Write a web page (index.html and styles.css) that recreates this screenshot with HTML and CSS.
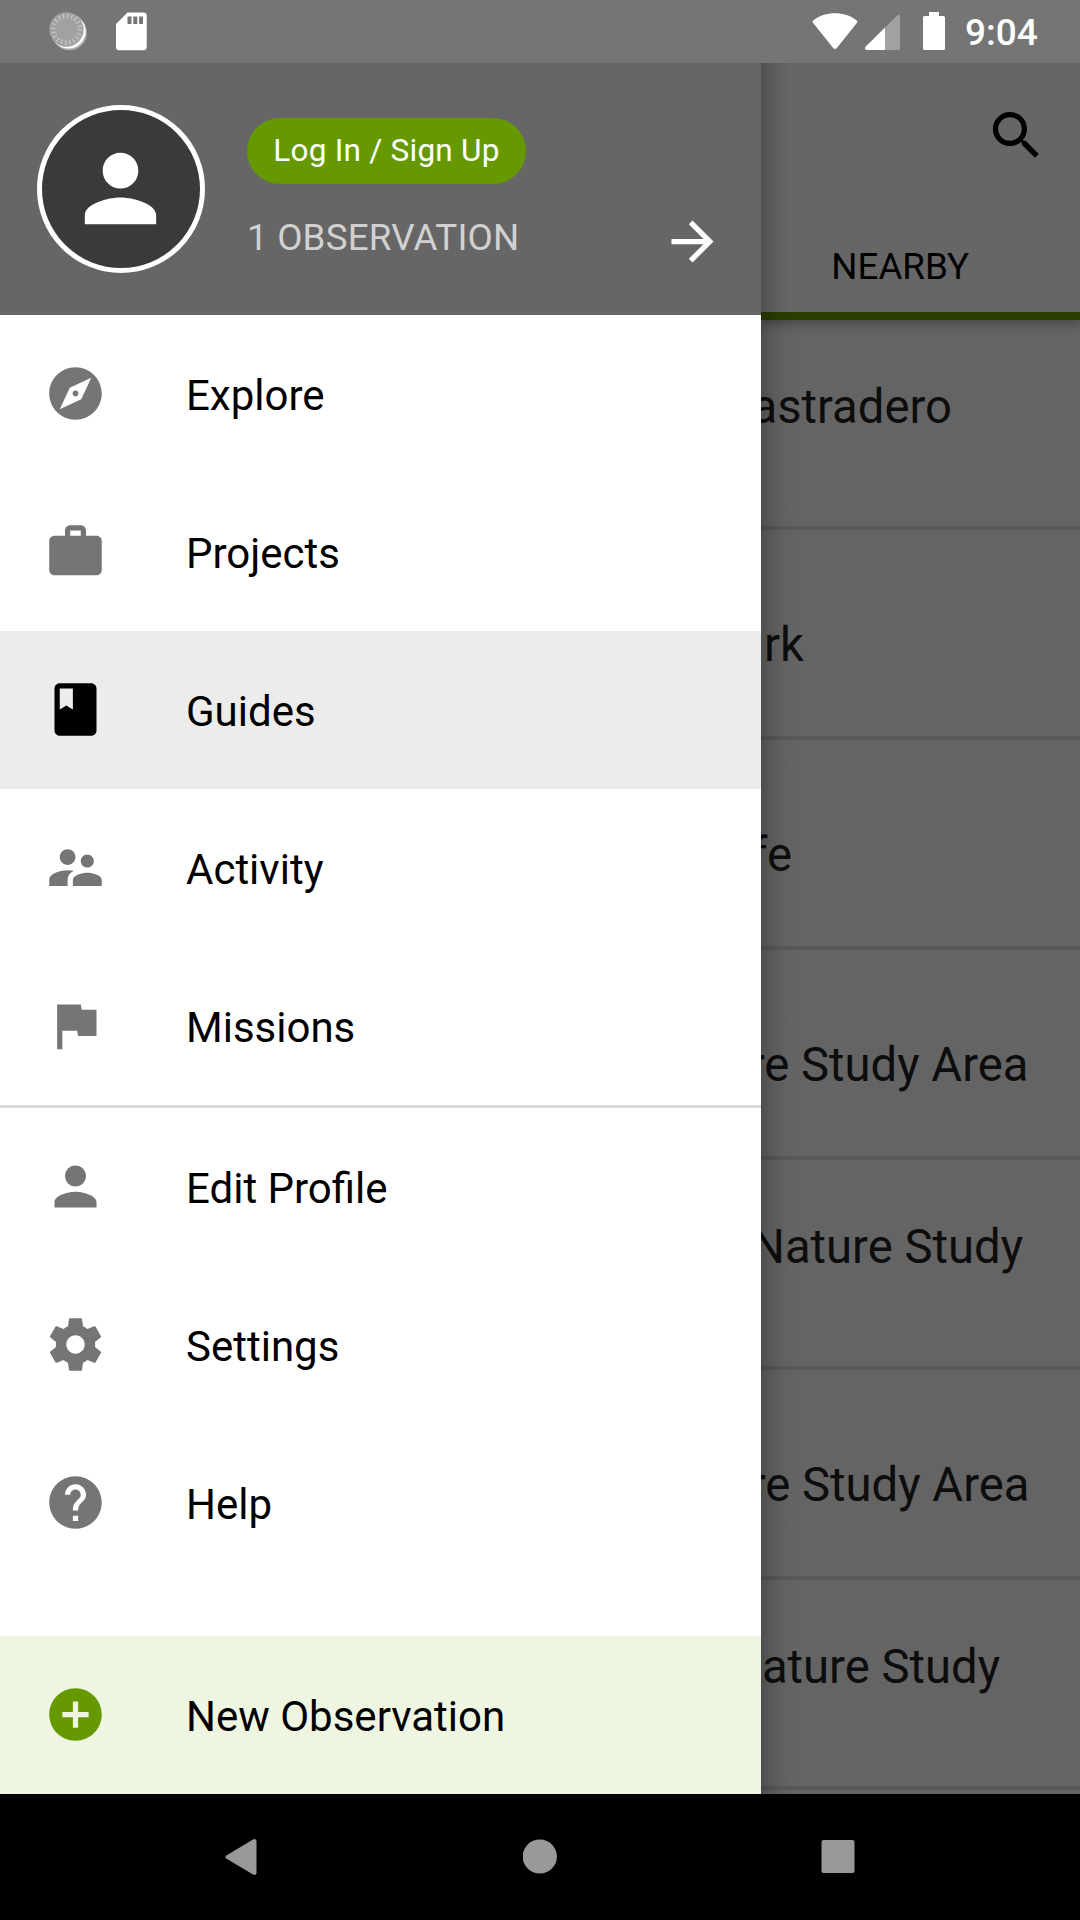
FILE: index.html
```html
<!DOCTYPE html>
<html lang="en">
<head>
<meta charset="utf-8">
<title>Guides</title>
<link rel="stylesheet" href="styles.css">
</head>
<body>
<div class="screen">
  <header class="status">
    <svg class="status-left" width="160" height="63" viewBox="0 0 160 63">
      <circle cx="69.5" cy="32.8" r="17.4" fill="#b0b0b0"/>
      <circle cx="68.3" cy="31.2" r="17.4" fill="#fff"/>
      <circle cx="66.5" cy="29.5" r="17.2" fill="#a1a1a1"/>
      <circle cx="66.5" cy="29.3" r="13.3" fill="none" stroke="#c2c2c2" stroke-width="5" stroke-dasharray="1.4 2.778"/>
      <path fill="#fff" fill-rule="evenodd" d="M127.5 12.5H143.500a3.200 3.200 0 0 1 3.200 3.200V47a3.200 3.200 0 0 1-3.200 3.200H119.200a3.200 3.200 0 0 1-3.200-3.200V24ZM127.500 16.500V24H131.500V16.500ZM133.300 16.500V24H137.300V16.500ZM139.100 16.500V24H143V16.500Z"/>
    </svg>
    <div class="status-right">
      <svg width="140" height="63" viewBox="810 0 140 63">
        <path fill="#fff" d="M813.300 20.500C825 10.800 845 10.800 856.700 20.500Q858 21.500 857 22.800L836.800 48Q835 50 833.200 48L813 22.800Q812 21.500 813.300 20.500Z"/>
        <path fill="#a1a1a1" d="M885 27.500L897.500 15.200Q900 13.800 900 16.500V48.500Q900 50 898.500 50H885Z"/>
        <path fill="#fff" d="M885 27.500V50H866.500Q864 49.500 865.500 46.800Z"/>
        <path fill="#fff" d="M929 12H939V16H943.500Q945 16 945 17.500V48.500Q945 50 943.500 50H924.500Q923 50 923 48.500V17.500Q923 16 924.500 16H929Z"/>
      </svg>
      <span class="clock">9:04</span>
    </div>
  </header>

  <main class="body">
    <aside class="drawer">
      <section class="profile">
        <div class="avatar">
          <svg width="107" height="107" viewBox="0 0 24 24"><path fill="#fff" d="M12 12c2.210 0 4-1.790 4-4s-1.790-4-4-4-4 1.790-4 4 1.790 4 4 4zm0 2c-2.670 0-8 1.340-8 4v2h16v-2c0-2.660-5.330-4-8-4z"/></svg>
        </div>
        <div class="account">
          <button class="login">Log In / Sign Up</button>
          <span class="count">1 OBSERVATION</span>
        </div>
        <svg class="arrow" viewBox="0 0 24 24"><path d="M12 4l-1.410 1.410L16.170 11H4v2h12.170l-5.580 5.590L12 20l8-8z"/></svg>
      </section>
      <nav class="menu">
        <a class="item"><svg class="icon" viewBox="0 0 24 24"><path d="M12 10.900c-.610 0-1.100.490-1.100 1.100s.490 1.100 1.100 1.100c.610 0 1.100-.490 1.100-1.100s-.490-1.100-1.100-1.100zM12 2C6.480 2 2 6.480 2 12s4.480 10 10 10 10-4.480 10-10S17.520 2 12 2zm2.190 12.190L6 18l3.810-8.190L18 6l-3.810 8.190z"/></svg><span>Explore</span></a>
        <a class="item"><svg class="icon" viewBox="0 0 24 24"><path d="M20 6h-4V4c0-1.110-.890-2-2-2h-4c-1.110 0-2 .890-2 2v2H4c-1.110 0-2 .890-2 2v11c0 1.110.890 2 2 2h16c1.110 0 2-.890 2-2V8c0-1.110-.890-2-2-2zm-6 0h-4V4h4v2z"/></svg><span>Projects</span></a>
        <a class="item selected"><svg class="icon" viewBox="0 0 24 24"><path d="M18 2H6c-1.100 0-2 .900-2 2v16c0 1.100.900 2 2 2h12c1.100 0 2-.900 2-2V4c0-1.100-.900-2-2-2zM6 4h5v8l-2.500-1.500L6 12V4z"/></svg><span>Guides</span></a>
        <a class="item"><svg class="icon" viewBox="0 0 24 24"><path d="M16.500 12c1.380 0 2.490-1.120 2.490-2.500S17.880 7 16.500 7C15.120 7 14 8.120 14 9.500s1.120 2.500 2.500 2.500zM9 11c1.660 0 2.990-1.340 2.990-3S10.660 5 9 5C7.340 5 6 6.340 6 8s1.340 3 3 3zm7.500 3c-1.830 0-5.500.920-5.500 2.750V19h11v-2.250c0-1.830-3.670-2.750-5.500-2.750zM9 13c-2.330 0-7 1.170-7 3.500V19h7v-2.250c0-.850.330-2.340 2.370-3.470C10.500 13.100 9.660 13 9 13z"/></svg><span>Activity</span></a>
        <a class="item"><svg class="icon" viewBox="0 0 24 24"><path d="M14.400 6L14 4H5v17h2v-7h5.600l.400 2h7V6z"/></svg><span>Missions</span></a>
        <hr class="rule">
        <a class="item"><svg class="icon" viewBox="0 0 24 24"><path d="M12 12c2.210 0 4-1.790 4-4s-1.790-4-4-4-4 1.790-4 4 1.790 4 4 4zm0 2c-2.670 0-8 1.340-8 4v2h16v-2c0-2.660-5.330-4-8-4z"/></svg><span>Edit Profile</span></a>
        <a class="item"><svg class="icon" viewBox="0 0 24 24"><path d="M19.430 12.980c.040-.320.070-.640.070-.980s-.030-.660-.070-.980l2.110-1.650c.190-.150.240-.420.120-.640l-2-3.460c-.120-.220-.390-.300-.610-.220l-2.490 1c-.520-.400-1.080-.730-1.690-.980l-.380-2.650C14.460 2.180 14.250 2 14 2h-4c-.250 0-.460.180-.490.420l-.380 2.650c-.610.250-1.170.590-1.690.980l-2.490-1c-.230-.090-.490 0-.610.220l-2 3.460c-.130.220-.070.490.120.640l2.110 1.650c-.040.320-.070.650-.070.980s.030.660.070.980l-2.110 1.650c-.190.150-.240.420-.120.640l2 3.460c.120.220.390.300.610.220l2.490-1c.520.400 1.080.730 1.690.980l.380 2.650c.030.240.240.420.490.420h4c.250 0 .460-.180.490-.420l.380-2.650c.610-.250 1.170-.590 1.690-.980l2.490 1c.230.090.490 0 .610-.220l2-3.460c.120-.220.070-.490-.120-.640l-2.110-1.650zM12 15.500c-1.930 0-3.500-1.570-3.500-3.500s1.570-3.500 3.500-3.500 3.500 1.570 3.500 3.500-1.570 3.500-3.500 3.500z"/></svg><span>Settings</span></a>
        <a class="item"><svg class="icon" viewBox="0 0 24 24"><path d="M12 2C6.480 2 2 6.480 2 12s4.480 10 10 10 10-4.480 10-10S17.520 2 12 2zm1 17h-2v-2h2v2zm2.070-7.750l-.900.920C13.450 12.900 13 13.500 13 15h-2v-.500c0-1.100.450-2.100 1.170-2.830l1.240-1.260c.370-.360.590-.860.590-1.410 0-1.100-.900-2-2-2s-2 .900-2 2H8c0-2.210 1.790-4 4-4s4 1.790 4 4c0 .880-.360 1.680-.930 2.250z"/></svg><span>Help</span></a>
      </nav>
      <a class="item create"><svg class="icon" viewBox="0 0 24 24"><path d="M12 2C6.480 2 2 6.480 2 12s4.480 10 10 10 10-4.480 10-10S17.520 2 12 2zm5 11h-4v4h-2v-4H7v-2h4V7h2v4h4v2z"/></svg><span>New Observation</span></a>
    </aside>

    <section class="page">
      <div class="toolbar">
        <svg class="search" viewBox="0 0 24 24"><path d="M15.500 14h-.790l-.280-.270C15.410 12.590 16 11.110 16 9.500 16 5.910 13.090 3 9.500 3S3 5.910 3 9.500 5.910 16 9.500 16c1.610 0 3.090-.590 4.230-1.570l.270.280v.790l5 4.990L20.490 19l-4.990-5zm-6 0C7.010 14 5 11.990 5 9.500S7.010 5 9.500 5 14 7.010 14 9.500 11.990 14 9.500 14z"/></svg>
        <div class="tab">NEARBY</div>
      </div>
      <ul class="guides">
        <li class="guide two-line g1">astradero</li>
        <li class="guide g2">rk</li>
        <li class="guide g3">fe</li>
        <li class="guide g4">re Study Area</li>
        <li class="guide two-line g5">Nature Study</li>
        <li class="guide g6">re Study Area</li>
        <li class="guide two-line g7">ature Study</li>
      </ul>
    </section>
  </main>

  <footer class="navbar">
    <svg width="36" height="40" viewBox="0 0 36 40"><path fill="#999" d="M1.300 18.500L28 2.400Q31.500 1 31.500 4.500V35.500Q31.500 39 28 37.500L1.300 21.500Q-.700 20 1.300 18.500Z"/></svg>
    <svg width="36" height="36" viewBox="0 0 36 36"><circle cx="16.800" cy="17.500" r="17.100" fill="#999"/></svg>
    <svg width="36" height="36" viewBox="0 0 36 36"><rect x="1.500" y="1" width="33" height="33" rx="2" fill="#999"/></svg>
  </footer>
</div>
</body>
</html>
```

FILE: styles.css
```css
* { box-sizing: border-box; }

body {
  margin: 0;
  font-family: Roboto, "Liberation Sans", sans-serif;
  background: #000;
}

svg { display: block; flex: none; }

.screen {
  width: 1080px;
  height: 1920px;
  display: flex;
  flex-direction: column;
  overflow: hidden;
}

/* Status bar */
.status {
  height: 63px;
  display: flex;
  justify-content: space-between;
  background: #757575;
}

.status-right {
  display: flex;
  gap: 15px;
  padding-right: 42px;
}

.clock {
  width: 73px;
  font-size: 37px;
  font-weight: 500;
  line-height: 66px;
  color: #fff;
  white-space: nowrap;
}

.body {
  height: 1731px;
  display: flex;
}

/* Drawer */
.drawer {
  position: relative;
  z-index: 1;
  width: 761px;
  flex: none;
  display: flex;
  flex-direction: column;
  background: #fff;
}

/* Shadow cast on the page */
.drawer::after {
  content: "";
  position: absolute;
  top: 0;
  bottom: 0;
  left: 100%;
  width: 34px;
  background: linear-gradient(to right, rgba(0, 0, 0, .22), rgba(0, 0, 0, .1) 35%, rgba(0, 0, 0, .03) 70%, transparent);
}

.profile {
  height: 252px;
  display: flex;
  align-items: flex-start;
  padding: 42px 37px;
  background: #666;
}

.avatar {
  width: 168px;
  height: 168px;
  flex: none;
  display: flex;
  align-items: center;
  justify-content: center;
  padding: 0 1px 2px 0;
  border: 5px solid #fff;
  border-radius: 50%;
  background: #3a3a3a;
}

.account {
  flex: 1;
  display: flex;
  flex-direction: column;
  align-items: flex-start;
  gap: 32px;
  padding: 13px 0 0 42px;
}

.login {
  width: 279px;
  height: 66px;
  padding: 0 0 1px;
  border: 0;
  border-radius: 33px;
  background: #690;
  color: #fff;
  font: 400 31.500px/1 Roboto, "Liberation Sans", sans-serif;
  letter-spacing: .25px;
}

.count {
  font-size: 36.750px;
  line-height: 44px;
  letter-spacing: .18px;
  color: #d1d1d1;
}

.arrow {
  width: 63px;
  height: 63px;
  margin-top: 105px;
  fill: #fff;
}

.menu { flex: 1; }

.item {
  height: 158px;
  display: flex;
  align-items: flex-start;
  gap: 79px;
  padding: 47px 44px 0;
  font-size: 42px;
  line-height: 68px;
  color: #000;
}

.icon {
  width: 63px;
  height: 63px;
  fill: #757575;
}

.selected { background: #ececec; }
.selected .icon { fill: #000; }

.rule {
  height: 3px;
  margin: 0;
  border: 0;
  background: #dadada;
}

.create { background: #eef5e1; }
.create .icon { fill: #690; }

/* Dimmed page behind the drawer */
.page {
  flex: 1;
  min-width: 0;
  overflow: hidden;
  background: #646464;
}

.toolbar {
  position: relative;
  height: 257px;
  display: flex;
  flex-direction: column;
  align-items: flex-end;
  justify-content: space-between;
  padding: 41px 32px 23px 0;
  border-bottom: 8px solid #2a3e00;
  background: #666;
  box-shadow: 0 4px 10px rgba(0, 0, 0, .3);
}

.search {
  width: 63px;
  height: 63px;
}

.tab {
  padding-right: 79px;
  font-size: 36.750px;
  line-height: 44px;
}

.guides {
  margin: 0;
  padding: 0;
  list-style: none;
}

.guide {
  height: 210px;
  display: flex;
  justify-content: flex-end;
  padding-top: 88px;
  border-bottom: 4px solid #595959;
  font-size: 47.250px;
  line-height: 55px;
  color: #0d0d0d;
  white-space: nowrap;
}

.two-line { padding-top: 60px; }

.g1 { padding-right: 128px; }
.g2 { padding-right: 276px; }
.g3 { padding-right: 288px; }
.g4 { padding-right: 51.500px; }
.g5 { padding-right: 57px; }
.g6 { padding-right: 50.500px; }
.g7 { padding-right: 80px; }

/* System navigation */
.navbar {
  height: 126px;
  display: flex;
  align-items: center;
  justify-content: space-between;
  padding: 0 224px 0 225px;
  background: #000;
}
```
